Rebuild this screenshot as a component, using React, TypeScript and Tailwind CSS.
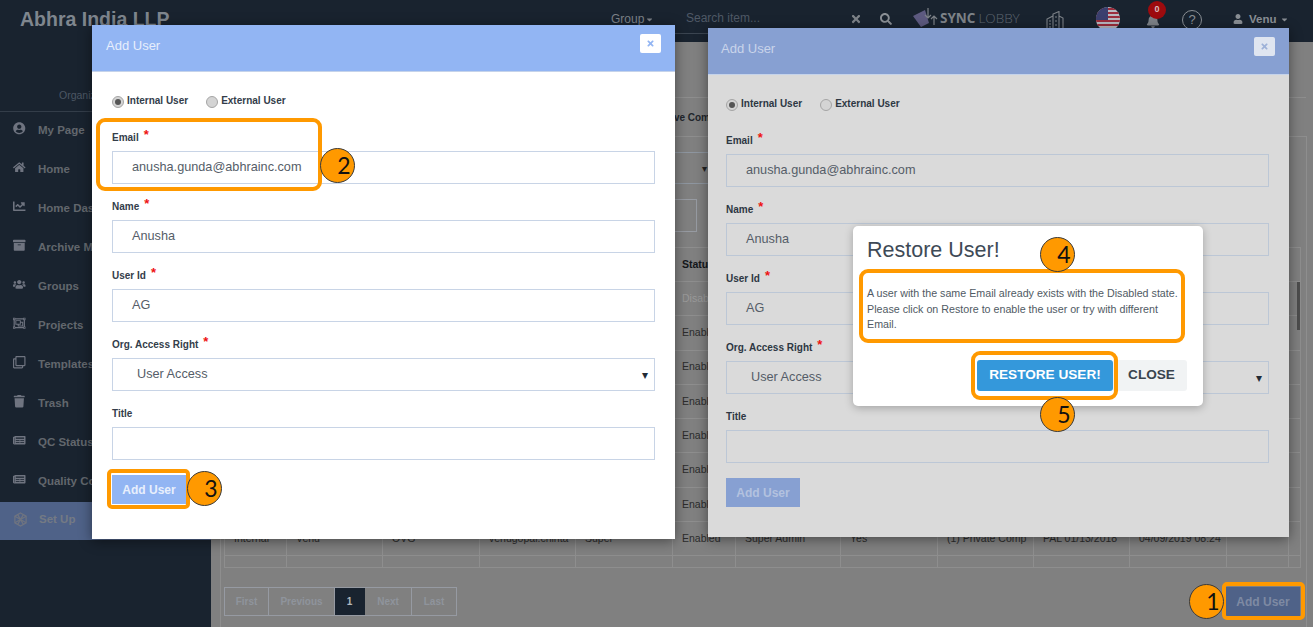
import React from "react";
import { FaUserCircle, FaHome, FaChartLine, FaArchive, FaUsers, FaRegObjectGroup, FaRegClone, FaTrash, FaNewspaper, FaBell, FaUser, FaSearch, FaTimes, FaCaretDown } from "react-icons/fa";

const SetUpIcon = () => (
  <svg viewBox="0 0 16 16" className="w-[15px] h-[15px] fill-none stroke-[#6f7480] stroke-[1.3]">
    <path d="M8 1l6 3.5v7L8 15l-6-3.5v-7z" />
    <path d="M2 4.500l12 7M14 4.500l-12 7M5 2.800l6 10.400M11 2.800L5 13.200" />
  </svg>
);

const navItems: [string, React.ReactNode][] = [
  ["My Page", <FaUserCircle />],
  ["Home", <FaHome />],
  ["Home Dashboard", <FaChartLine />],
  ["Archive Module", <FaArchive />],
  ["Groups", <FaUsers />],
  ["Projects", <FaRegObjectGroup />],
  ["Templates", <FaRegClone />],
  ["Trash", <FaTrash />],
  ["QC Status", <FaNewspaper />],
  ["Quality Control", <FaNewspaper />],
];

const rows = Array.from({ length: 7 }, (_, i) => ({ status: i === 0 ? "Disabled" : "Enabled", dim: i === 0 }));

const colsClass = "grid grid-cols-[62px_96px_97px_96px_97px_63px_105px_97px_96px_96px_97px_62px_1fr]";

const Cell = ({ children, className = "" }: { children?: React.ReactNode; className?: string }) => (
  <div className={`border-r border-[#8e8e8e] pl-[9px] flex items-center overflow-hidden whitespace-nowrap ${className}`}>{children}</div>
);

const Field = ({ label, req, value, select, t, b }: { label: string; req?: boolean; value?: string; select?: boolean; t: string; b: string }) => (
  <div>
    <div className={`h-[36px] flex items-end pb-[6px] text-[10px] leading-[14px] font-bold ${t}`}>
      {label}
      {req && <span className="text-[#ee1111] text-[13px] ml-[5px] relative -top-[3px]">*</span>}
    </div>
    <div className={`h-[33px] border flex items-center text-[12.700px] text-[#555d68] ${b} ${select ? "pl-[24px] pr-[6px] justify-between" : "pl-[19px]"}`}>
      <span>{value}</span>
      {select && <span className="text-[12px] leading-none text-[#222b36]">▾</span>}
    </div>
  </div>
);

const Radio = ({ on }: { on?: boolean }) => (
  <span className="w-[12px] h-[12px] rounded-full border border-[#a5a5a5] bg-[#d4d4d4] flex items-center justify-center mt-[3px]">
    {on && <span className="w-[6px] h-[6px] rounded-full bg-[#555]" />}
  </span>
);

const AddUserModal = ({ pos, bg, head, headPad, bodyPad, border, closeText, closeBg, titleText, labelText, btn, btnText }: { pos: string; bg: string; head: string; headPad: string; bodyPad: string; border: string; closeText: string; closeBg: string; titleText: string; labelText: string; btn: string; btnText: string }) => (
  <div className={`absolute ${pos} ${bg} shadow-[0_2px_12px_rgba(0,0,0,0.45)]`}>
    <div className={`h-[47px] ${head} ${headPad} border-b border-[#c5d3ea] pr-[14px] flex justify-between`}>
      <span className={`text-[13px] leading-[15px] mt-[13px] ${titleText}`}>Add User</span>
      <span className={`w-[21px] h-[19px] mt-[9px] rounded-[2px] flex items-center justify-center text-[9px] ${closeBg} ${closeText}`}><FaTimes /></span>
    </div>
    <div className={bodyPad}>
      <div className={`mt-[21px] mb-[8px] h-[14px] flex items-center text-[10px] font-bold ${labelText}`}>
        <Radio on />
        <span className="ml-[3px]">Internal User</span>
        <span className="w-[18px]" />
        <Radio />
        <span className="ml-[3px]">External User</span>
      </div>
      <Field t={labelText} b={border} label="Email" req value="anusha.gunda@abhrainc.com" />
      <Field t={labelText} b={border} label="Name" req value="Anusha" />
      <Field t={labelText} b={border} label="User Id" req value="AG" />
      <Field t={labelText} b={border} label="Org. Access Right" req value="User Access" select />
      <Field t={labelText} b={border} label="Title" />
      <div className={`mt-[15px] w-[74px] h-[29px] flex items-center justify-center text-[12px] font-bold ${btn} ${btnText}`}>Add User</div>
    </div>
  </div>
);

const Badge = ({ pos, n }: { pos: string; n: number }) => (
  <div className={`absolute ${pos} w-[35px] h-[35px] rounded-full bg-[#ff9900] border border-[#3a3a3a] flex items-center justify-center pl-[13px] text-[23px] text-[#111] [font-family:Lato,sans-serif]`}>{n}</div>
);

const Ring = ({ pos }: { pos: string }) => <div className={`absolute ${pos} border-[4px] border-[#ff9900] rounded-[9px]`} />;

const PageBtn = ({ children, className = "" }: { children: React.ReactNode; className?: string }) => (
  <div className={`h-full flex items-center justify-center text-[10px] font-bold border-r border-[#969aa2] text-[#8f949c] ${className}`}>{children}</div>
);

const Flag = () => (
  <svg viewBox="0 0 24 24" className="w-[24px] h-[24px]">
    <defs>
      <clipPath id="fc"><circle cx="12" cy="12" r="12" /></clipPath>
    </defs>
    <g clipPath="url(#fc)">
      <rect width="24" height="24" fill="#b9b9c0" />
      {[1, 5, 9, 13, 17, 21].map((y) => (
        <rect key={y} y={y} width="24" height="2" fill="#9c2d3c" />
      ))}
      <rect width="12" height="13" fill="#3b3f6e" />
    </g>
  </svg>
);

export default function App() {
  return (
    <div className="relative w-[1313px] h-[627px] overflow-hidden bg-[#808080] [font-family:'Liberation_Sans',Arial,sans-serif]">
      {/* top bar */}
      <header className="h-[42px] bg-[#19232f] flex items-start text-[#7d8288]">
        <div className="w-[611px] pl-[20px] pt-[7px] text-[19.500px] leading-[24px] font-bold text-[#7f868e]">Abhra India LLP</div>
        <div className="w-[64px] pt-[12px] text-[12px] leading-[14px] flex items-center">Group<FaCaretDown className="text-[9px] ml-[1px]" /></div>
        <div className="w-[175px] h-[34px] border-b border-[#3b4551] pl-[11px] pt-[11px] text-[12px] leading-[14px] text-[#4f5966]">Search item...</div>
        <div className="w-[30px] pt-[13px] text-[12px] text-[#7d8288]"><FaTimes /></div>
        <div className="w-[32px] pt-[13px] text-[12px] text-[#8a8f95]"><FaSearch /></div>
        <div className="flex items-center w-[128px] pt-[7px]">
          <svg viewBox="0 0 26 22" className="w-[26px] h-[22px]">
            <path d="M1 9L13 3l4 13-8 4z" fill="#5d5a80" />
            <path d="M16 1v10M13 8l3 3 3-3M22 18V9M19 12l3-3 3 3" fill="none" stroke="#7d8288" strokeWidth="1.2" />
          </svg>
          <span className="text-[13.500px] font-bold ml-[2px] text-[#7d8288] [font-family:'Open_Sans',sans-serif]">SYNC</span>
          <span className="text-[13.500px] ml-[3px] text-[#5e6670] [font-family:'Open_Sans',sans-serif] font-light">LOBBY</span>
        </div>
      </header>

      <div className="absolute left-[1046px] top-[11px]">
        <svg viewBox="0 0 18 20" className="w-[18px] h-[20px] fill-none stroke-[#7d8288] stroke-[1.1]"><path d="M1 19V8l6-3v14M7 19V3l6-2.500V19M13 5l4 2v12M3 10h2M3 13h2M3 16h2M9 6h2M9 10h2M9 14h2" /></svg>
      </div>
      <div className="absolute left-[1096px] top-[7px]"><Flag /></div>
      <div className="absolute left-[1146px] top-[14px] text-[14px] text-[#7d8288]"><FaBell /></div>
      <div className="absolute left-[1148px] top-[1px] w-[18px] h-[18px] rounded-full bg-[#9d0b0e] text-[#d9bcbc] text-[9px] font-bold flex items-center justify-center">0</div>
      <div className="absolute left-[1182px] top-[10px] w-[20px] h-[20px] rounded-full border border-[#8a8f95] text-[#8a8f95] text-[13px] flex items-center justify-center">?</div>
      <div className="absolute left-[1233px] top-[14px] text-[10px] text-[#8a8f95]"><FaUser /></div>
      <div className="absolute left-[1249px] top-[12px] text-[11.500px] font-bold leading-[14px] text-[#8a8f95] flex items-center">Venu<FaCaretDown className="text-[9px] ml-[4px]" /></div>

      <div className="flex h-[585px]">
        {/* sidebar */}
        <aside className="w-[211px] shrink-0 bg-[#19232f] flex flex-col">
          <div className="h-[70px] border-b border-[#333d49] pl-[59px] pt-[46px] text-[10.500px] leading-[14px] text-[#4c5764]">Organization</div>
          <nav>
            {navItems.map(([label, icon]) => (
              <div key={label} className="h-[39px] flex items-start pt-[10px] pl-[13px]">
                <span className="w-[25px] text-[12.500px] text-[#6f7480]">{icon}</span>
                <span className="text-[11.500px] font-bold leading-[14px] mt-[1px] text-[#62676d] whitespace-nowrap">{label}</span>
              </div>
            ))}
            <div className="h-[38px] bg-[#4f6288] flex items-start pt-[10px] pl-[13px]">
              <span className="w-[26px]"><SetUpIcon /></span>
              <span className="text-[11.500px] font-bold leading-[14px] text-[#747a84]">Set Up</span>
            </div>
          </nav>
        </aside>

        {/* main */}
        <main className="flex-1 min-w-0 pl-[9px] relative flex flex-col text-[10.500px] text-[#2c2c2c]">
          <div className="h-[56px] w-[1086px] shrink-0 border-b border-[#8e8e8e]" />
          <div className="h-[38px] shrink-0 flex items-center pl-[435px] text-[10px] font-bold text-[#22262c] whitespace-nowrap">Active Comp</div>
          <section className="flex-1 w-[1087px] border-t border-x border-[#8e8e8e] pl-[3px] pr-[5px] flex flex-col">
            <div className="mt-[15px] h-[32px] w-[1040px] border-y border-[#8e96a0] flex items-center pl-[478px] text-[10px] text-[#222]">▾</div>
            <div className="mt-[15px] h-[33px] w-[70px] ml-[403px] border border-[#979ba2]" />
            <div className="mt-[15px] h-[321px] border border-[#8e8e8e] flex flex-col">
              <div className={`${colsClass} h-[34px] border-b border-[#8e8e8e] font-bold text-[#14171b]`}>
                <Cell>Type</Cell><Cell>Name</Cell><Cell>Org</Cell><Cell>Email</Cell><Cell>Access</Cell><Cell>Status</Cell><Cell>Role</Cell><Cell>Active</Cell><Cell>Company</Cell><Cell>Created</Cell><Cell>Login</Cell><Cell /><Cell className="!border-r-0" />
              </div>
              {rows.map((r, i) => (
                <div key={i} className={`${colsClass} h-[34.300px] border-b border-[#8e8e8e] ${r.dim ? "text-[#9a9a9a]" : ""}`}>
                  <Cell /><Cell /><Cell /><Cell /><Cell /><Cell>{r.status}</Cell><Cell /><Cell /><Cell /><Cell /><Cell /><Cell /><Cell className="!border-r-0" />
                </div>
              ))}
              <div className={`${colsClass} h-[34.300px] border-b border-[#8e8e8e]`}>
                <Cell>Internal</Cell><Cell>Venu</Cell><Cell>OVG</Cell><Cell>venugopal.chinta</Cell><Cell>Super</Cell><Cell>Enabled</Cell><Cell>Super Admin</Cell><Cell>Yes</Cell><Cell>(1) Private Comp</Cell><Cell>PAL 01/13/2018</Cell><Cell>04/09/2019 08:24</Cell><Cell /><Cell className="!border-r-0" />
              </div>
              <div className={`${colsClass} flex-1`}>
                <Cell /><Cell /><Cell /><Cell /><Cell /><Cell /><Cell /><Cell /><Cell /><Cell /><Cell /><Cell /><Cell className="!border-r-0" />
              </div>
            </div>
            <div className="mt-[19px] flex justify-between items-center pr-[1px]">
              <div className="flex h-[29px] w-[233px] border border-[#969aa2]">
                <PageBtn className="w-[44px]">First</PageBtn>
                <PageBtn className="w-[66px]">Previous</PageBtn>
                <PageBtn className="w-[30px] bg-[#19232f] !text-[#b5b8bc] !border-[#19232f]">1</PageBtn>
                <PageBtn className="w-[47px]">Next</PageBtn>
                <PageBtn className="flex-1 !border-r-0">Last</PageBtn>
              </div>
              <div className="w-[74px] h-[29px] bg-[#4f6288] flex items-center justify-center text-[12px] font-bold text-[#7e8aa3]">Add User</div>
            </div>
          </section>
          <div className="absolute right-[13px] top-[240px] w-[3px] h-[48px] bg-[#4d4d4d]" />
        </main>
      </div>

      {/* left dialog */}
      <AddUserModal pos="left-[92px] top-[25px] w-[583px] h-[514px]" bg="bg-white" head="bg-[#92b5f3]" headPad="pl-[14px]" bodyPad="px-5" border="border-[#c8d4e6]" closeText="text-[#92b5f3]" closeBg="bg-white" titleText="text-[#e6eefc]" labelText="text-[#333d4a]" btn="bg-[#92b5f3]" btnText="text-[#e8effc]" />

      {/* right dialog */}
      <AddUserModal pos="left-[708px] top-[28px] w-[581px] h-[509px]" bg="bg-[#dadada]" head="bg-[#87a0d2]" headPad="pl-[13px]" bodyPad="pl-[18px] pr-[20px]" border="border-[#bcc7d6]" closeText="text-[#9db1d8]" closeBg="bg-[#dfe5f0]" titleText="text-[#c9d4ea]" labelText="text-[#2d3743]" btn="bg-[#87a0d2]" btnText="text-[#b3c2df]" />

      {/* restore alert */}
      <div className="absolute left-[853px] top-[226px] w-[350px] h-[180px] bg-white rounded-[5px] shadow-[0_2px_8px_rgba(0,0,0,0.25)] pl-[14px] pr-[22px]">
        <h2 className="mt-[11px] text-[21.500px] leading-[26px] text-[#3e4a56]">Restore User!</h2>
        <p className="mt-[23px] -mr-[4px] text-[10.700px] leading-[15.500px] text-[#505a64]">A user with the same Email already exists with the Disabled state. Please click on Restore to enable the user or try with different Email.</p>
        <div className="absolute left-[124px] top-[134px] flex h-[31px]">
          <div className="w-[136px] bg-[#3498db] rounded-[3px] text-white text-[13.600px] font-bold flex items-center justify-center">RESTORE USER!</div>
          <div className="w-[74px] pl-[3px] bg-[#f1f3f4] rounded-r-[3px] text-[#3a444e] text-[13.600px] font-bold flex items-center justify-center">CLOSE</div>
        </div>
      </div>

      {/* annotations */}
      <Ring pos="left-[96px] top-[118px] w-[226px] h-[73px]" />
      <Ring pos="left-[107px] top-[469px] w-[83px] h-[40px] !rounded-[5px]" />
      <Ring pos="left-[859px] top-[269px] w-[326px] h-[74px]" />
      <Ring pos="left-[971px] top-[351px] w-[147px] h-[49px]" />
      <Ring pos="left-[1222px] top-[582px] w-[83px] h-[38px] !rounded-[5px]" />
      <Badge pos="left-[1189px] top-[584px]" n={1} />
      <Badge pos="left-[320px] top-[148px]" n={2} />
      <Badge pos="left-[187px] top-[471px]" n={3} />
      <Badge pos="left-[1040px] top-[237px]" n={4} />
      <Badge pos="left-[1040px] top-[397px]" n={5} />
    </div>
  );
}
